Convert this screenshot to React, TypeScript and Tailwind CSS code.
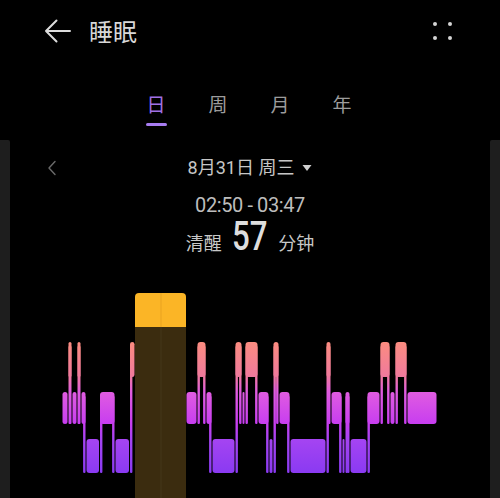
import React from "react";

type Seg = [number, number, number];

const BANDS: Record<number, [number, number]> = {
  0: [293, 327],
  1: [342, 377],
  2: [392, 424],
  3: [439, 473],
};

const SEGS: Seg[] = [
  [62, 68, 2], [68, 72, 1], [72, 77, 2], [77, 81, 1], [81, 86, 2],
  [86, 99.5, 3], [99.5, 115, 2], [115, 129.5, 3], [129.5, 135, 1],
  [135, 186, 0], [186, 197, 2], [197, 206, 1], [206, 212, 2], [212, 235, 3],
  [235, 242, 1], [242, 245, 2], [245, 258, 1], [258, 269, 2], [269, 273, 3],
  [273, 279, 1], [279, 290, 2], [290, 326, 3], [326, 331, 1], [331, 342, 2],
  [342, 345, 3], [345, 350, 2], [350, 367, 3], [367, 380, 2], [380, 390, 1],
  [390, 395, 2], [395, 407, 1], [407, 437, 2],
];

function Chart() {
  const rects: React.ReactNode[] = [];
  const sw = 2.4;
  SEGS.forEach((s, i) => {
    const [x0, x1, lv] = s;
    if (lv === 0) return;
    const [top, bot] = BANDS[lv];
    const w = x1 - x0 - 1;
    rects.push(
      <rect key={`r${i}`} x={x0 + 0.5} y={top} width={Math.max(w, 1)} height={bot - top} rx={Math.min(3, w / 2)} fill="url(#sleepGrad)" />
    );
    const prev = SEGS[i - 1];
    const next = SEGS[i + 1];
    if (prev && prev[2] > lv && prev[2] !== 0) {
      const b = BANDS[prev[2]][1];
      rects.push(<rect key={`l${i}`} x={x0 + 0.5} y={top + 4} width={sw} height={b - top - 4} rx={1} fill="url(#sleepGrad)" />);
    }
    if (next && next[2] > lv && next[2] !== 0) {
      const b = BANDS[next[2]][1];
      rects.push(<rect key={`rr${i}`} x={x1 - 0.5 - sw} y={top + 4} width={sw} height={b - top - 4} rx={1} fill="url(#sleepGrad)" />);
    }
  });

  return (
    <svg width={480} height={213} viewBox="10 285 480 213" className="block">
      <defs>
        <linearGradient id="sleepGrad" gradientUnits="userSpaceOnUse" x1="0" y1="342" x2="0" y2="473">
          <stop offset="0" stopColor="#fb8c80" />
          <stop offset="0.26" stopColor="#f07a9c" />
          <stop offset="0.38" stopColor="#e05ce0" />
          <stop offset="0.62" stopColor="#c83ef0" />
          <stop offset="0.75" stopColor="#a444f2" />
          <stop offset="1" stopColor="#8a3af2" />
        </linearGradient>
      </defs>
      {rects}
      <rect x={135} y={326} width={51} height={172} fill="#3b2c0f" />
      <path d="M135 327 V297 Q135 293 139 293 H182 Q186 293 186 297 V327 Z" fill="#fbb526" />
      <rect x={160.5} y={293} width={1} height={34} fill="#e9a420" />
      <rect x={160.5} y={327} width={1} height={171} fill="#45361a" />
    </svg>
  );
}

export default function App() {
  return (
    <div className="w-[500px] h-[498px] bg-black overflow-hidden flex flex-col font-['Roboto','Noto_Sans_CJK_SC',sans-serif]">
      {/* Header */}
      <div className="h-[62px] shrink-0 flex items-center pl-[44px] pr-[48px]">
        <svg width="27" height="24" viewBox="0 0 27 24" className="block">
          <path d="M2 12 H26 M12.5 1.5 L2 12 L12.5 22.5" fill="none" stroke="#dcdcdc" strokeWidth="2" strokeLinecap="round" strokeLinejoin="round" />
        </svg>
        <span className="ml-[18px] text-[24px] leading-[30px] text-[#d8d8d8] mt-[3px]">睡眠</span>
        <div className="ml-auto grid grid-cols-2 gap-x-[11px] gap-y-[10px]">
          <span className="w-[4px] h-[4px] rounded-full bg-[#d4d4d4]" />
          <span className="w-[4px] h-[4px] rounded-full bg-[#d4d4d4]" />
          <span className="w-[4px] h-[4px] rounded-full bg-[#d4d4d4]" />
          <span className="w-[4px] h-[4px] rounded-full bg-[#d4d4d4]" />
        </div>
      </div>

      {/* Tabs */}
      <div className="h-[78px] shrink-0 flex pl-[125px] pt-[32px]">
        <div className="w-[62px] flex flex-col items-center">
          <span className="text-[19px] leading-[24px] text-[#a071e6]">日</span>
          <span className="mt-[5px] w-[21px] h-[3px] rounded-full bg-[#a77cf0]" />
        </div>
        <div className="w-[62px] flex flex-col items-center">
          <span className="text-[19px] leading-[24px] text-[#9c9c9c]">周</span>
        </div>
        <div className="w-[62px] flex flex-col items-center">
          <span className="text-[19px] leading-[24px] text-[#9c9c9c]">月</span>
        </div>
        <div className="w-[62px] flex flex-col items-center">
          <span className="text-[19px] leading-[24px] text-[#9c9c9c]">年</span>
        </div>
      </div>

      {/* Main */}
      <div className="flex-1 flex min-h-0">
        <div className="w-[10px] bg-[#1e1e1e] rounded-tr-[2px]" />
        <div className="w-[480px] flex flex-col">
          <div className="mt-[17px] h-[22px] flex items-center">
            <svg width="47" height="16" viewBox="0 0 47 16" className="block">
              <path d="M45 1.5 L39 8 L45 14.5" fill="none" stroke="#6a6a6a" strokeWidth="1.4" strokeLinecap="round" strokeLinejoin="round" />
            </svg>
            <div className="flex-1 flex items-center justify-center">
              <span className="text-[18px] leading-[22px] text-[#c6c6c6]">8月31日 周三</span>
              <svg width="10" height="8" viewBox="0 0 10 8" className="ml-[8px] block">
                <path d="M0.5 1 H9.5 L5 7 Z" fill="#cfcfcf" />
              </svg>
            </div>
            <div className="w-[47px]" />
          </div>
          <div className="mt-[16px] h-[20px] text-center text-[20px] leading-[20px] tracking-[-0.4px] text-[#bdbdbd]">
            02:50 - 03:47
          </div>
          <div className="mt-[2px] h-[36px] flex items-end justify-center">
            <div className="flex items-baseline">
              <span className="text-[18px] leading-none text-[#c8c8c8]">清醒</span>
              <span className="ml-[5px] mr-[6px] text-[40px] leading-[32px] font-medium text-[#dedede] inline-block scale-x-[0.78]">57</span>
              <span className="text-[18px] leading-none text-[#c8c8c8]">分钟</span>
            </div>
          </div>
          <div className="mt-auto">
            <Chart />
          </div>
        </div>
        <div className="w-[10px] bg-[#1e1e1e] rounded-tl-[2px]" />
      </div>
    </div>
  );
}
